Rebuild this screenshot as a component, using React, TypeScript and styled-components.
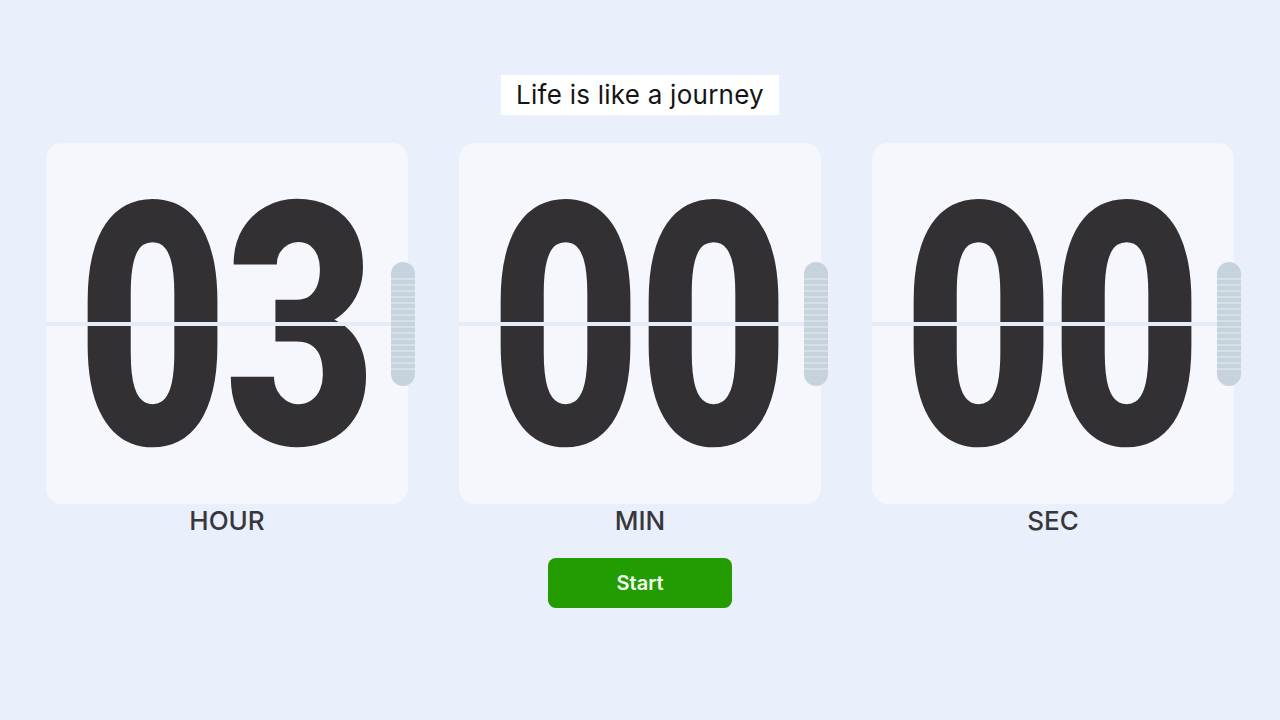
import styled, { createGlobalStyle } from "styled-components";

const GlobalStyle = createGlobalStyle`
  html, body {
    margin: 0;
    padding: 0;
    background: #eaf0fb;
  }
  body {
    font-family: Inter, "Noto Sans", "Liberation Sans", sans-serif;
  }
`;

const Page = styled.div`
  width: 1280px;
  height: 720px;
  display: flex;
  flex-direction: column;
  align-items: center;
  padding-top: 75px;
  box-sizing: border-box;
  overflow: hidden;
`;

const Title = styled.div`
  background: #ffffff;
  height: 40px;
  line-height: 40px;
  padding: 0 15px;
  font-size: 26px;
  letter-spacing: 0.25px;
  color: #141414;
`;

const Timers = styled.div`
  display: flex;
  gap: 51px;
  margin-top: 28px;
`;

const Column = styled.div`
  display: flex;
  flex-direction: column;
  align-items: center;
`;

const Card = styled.div`
  position: relative;
  width: 362px;
  height: 361px;
`;

const Face = styled.div`
  width: 100%;
  height: 100%;
  border-radius: 16px;
  background: #f5f7fd;
  display: flex;
  align-items: center;
  justify-content: center;
  gap: 15px;
  overflow: hidden;
`;

const DigitBox = styled.div`
  width: 133px;
  height: 300px;
  display: flex;
  align-items: center;
  justify-content: center;
`;

const Digit = styled.span`
  display: inline-block;
  flex: none;
  font-family: Roboto, "Liberation Sans", sans-serif;
  font-weight: 900;
  font-size: 340px;
  line-height: 1;
  color: #323033;
  transform: translateY(4px) scaleX(0.77);
`;

// the light seam across the middle of each flip card
const Split = styled.div`
  position: absolute;
  left: 0;
  right: 0;
  top: 50%;
  height: 4px;
  margin-top: -2px;
  background: #e4ecf8;
`;

const Tab = styled.div`
  position: absolute;
  right: -7px;
  top: 50%;
  width: 24px;
  height: 124px;
  margin-top: -62px;
  border-radius: 12px;
  background: repeating-linear-gradient(
      to bottom,
      #c6d3dc 0px,
      #c6d3dc 4px,
      #d5e0e7 4px,
      #d5e0e7 6px
    )
    center / 100% 100px no-repeat,
    #c6d3dc;
`;

const Label = styled.div`
  margin-top: 3px;
  font-size: 26px;
  line-height: 28px;
  font-weight: 500;
  color: #38373c;
`;

const StartButton = styled.button`
  margin-top: 23px;
  width: 184px;
  height: 50px;
  border: none;
  border-radius: 8px;
  background: #229c00;
  color: #f4fff0;
  font-family: Inter, "Liberation Sans", sans-serif;
  font-size: 20px;
  font-weight: 600;
  cursor: pointer;
`;

const units = [
  { label: "HOUR", value: "03" },
  { label: "MIN", value: "00" },
  { label: "SEC", value: "00" },
];

export default function App() {
  return (
    <>
      <GlobalStyle />
      <Page>
        <Title>Life is like a journey</Title>
        <Timers>
          {units.map((u) => (
            <Column key={u.label}>
              <Card>
                <Face>
                  {u.value.split("").map((d, i) => (
                    <DigitBox key={i}>
                      <Digit>{d}</Digit>
                    </DigitBox>
                  ))}
                </Face>
                <Split />
                <Tab />
              </Card>
              <Label>{u.label}</Label>
            </Column>
          ))}
        </Timers>
        <StartButton>Start</StartButton>
      </Page>
    </>
  );
}
